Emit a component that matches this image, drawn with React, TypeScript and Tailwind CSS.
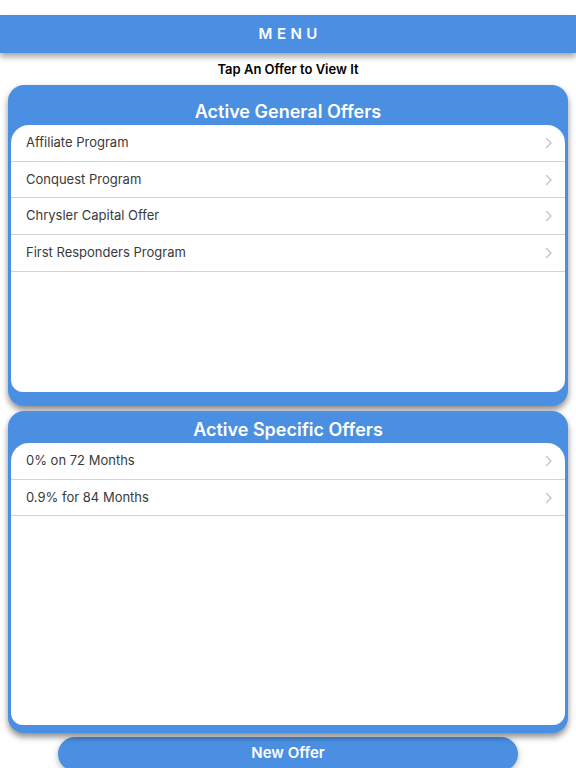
import React from 'react';

const general = ['Affiliate Program', 'Conquest Program', 'Chrysler Capital Offer', 'First Responders Program'];
const specific = ['0% on 72 Months', '0.9% for 84 Months'];

function Chevron() {
    return (
        <svg width="8" height="12" viewBox="0 0 8 12" fill="none">
            <path d="M1.5 1.5 L6 6 L1.5 10.5" stroke="#c3c3c7" strokeWidth="1.4" strokeLinecap="round" strokeLinejoin="round" />
        </svg>
    );
}

function OfferRow({ label }: { label: string }) {
    return (
        <div className="h-[36.7px] flex items-center justify-between pl-[15px] pr-[12px] border-b border-[#d4d4d6]">
            <span className="text-[13px] text-[#3a3a3a]">{label}</span>
            <Chevron />
        </div>
    );
}

function Panel({ title, items, pt, pb, listH }: { title: string; items: string[]; pt: string; pb: string; listH: string }) {
    return (
        <div className={`mx-[8px] bg-[#4a8fe2] rounded-[16px] px-[3px] shadow-[0_4px_6px_rgba(0,0,0,0.45)] ${pt} ${pb}`}>
            <h2 className="text-center text-white text-[18px] font-semibold leading-[24px] pb-[1px]">{title}</h2>
            <div className={`bg-white rounded-t-[18px] rounded-b-[12px] overflow-hidden ${listH}`}>
                {items.map((it) => (
                    <OfferRow key={it} label={it} />
                ))}
            </div>
        </div>
    );
}

export default function App() {
    return (
        <div className="w-[576px] h-[768px] bg-white overflow-hidden relative" style={{ fontFamily: 'Inter, "Noto Sans", sans-serif' }}>
            <div className="pt-[15px]">
                <div className="h-[38px] bg-[#4a8fe2] flex items-center justify-center shadow-[0_4px_6px_rgba(0,0,0,0.35)]">
                    <span className="text-white text-[15px] font-semibold tracking-[0.3em] pl-[0.3em]">MENU</span>
                </div>
            </div>
            <p className="text-center text-[13px] font-semibold text-black mt-[8px] leading-[16px]">Tap An Offer to View It</p>
            <div className="mt-[8px] flex flex-col gap-[5px]">
                <Panel title="Active General Offers" items={general} pt="pt-[15px]" pb="pb-[14px]" listH="h-[267px]" />
                <Panel title="Active Specific Offers" items={specific} pt="pt-[7px]" pb="pb-[8px]" listH="h-[282px]" />
            </div>
            <div className="mt-[4px] mx-[58px] h-[34px] bg-[#4a8fe2] rounded-full flex items-start justify-center pt-[5px] shadow-[0_2px_6px_rgba(0,0,0,0.3)]">
                <span className="text-white text-[15px] font-semibold">New Offer</span>
            </div>
        </div>
    );
}
